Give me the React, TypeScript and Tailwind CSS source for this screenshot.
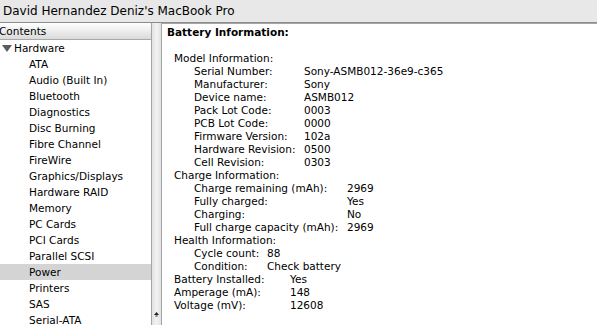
import React from 'react';

const hardware = [
  'ATA',
  'Audio (Built In)',
  'Bluetooth',
  'Diagnostics',
  'Disc Burning',
  'Fibre Channel',
  'FireWire',
  'Graphics/Displays',
  'Hardware RAID',
  'Memory',
  'PC Cards',
  'PCI Cards',
  'Parallel SCSI',
  'Power',
  'Printers',
  'SAS',
  'Serial-ATA',
];

const model = [
  ['Serial Number:', 'Sony-ASMB012-36e9-c365'],
  ['Manufacturer:', 'Sony'],
  ['Device name:', 'ASMB012'],
  ['Pack Lot Code:', '0003'],
  ['PCB Lot Code:', '0000'],
  ['Firmware Version:', '102a'],
  ['Hardware Revision:', '0500'],
  ['Cell Revision:', '0303'],
];

const charge = [
  ['Charge remaining (mAh):', '2969'],
  ['Fully charged:', 'Yes'],
  ['Charging:', 'No'],
  ['Full charge capacity (mAh):', '2969'],
];

const health = [
  ['Cycle count:', '88'],
  ['Condition:', 'Check battery'],
];

const battery = [
  ['Battery Installed:', 'Yes'],
  ['Amperage (mA):', '148'],
  ['Voltage (mV):', '12608'],
];

function Rows({ rows, cols }: { rows: string[][]; cols: string }) {
  return (
    <div className={`grid ${cols}`}>
      {rows.map(([k, v]) => (
        <React.Fragment key={k}>
          <span className="whitespace-nowrap">{k}</span>
          <span className="whitespace-nowrap">{v}</span>
        </React.Fragment>
      ))}
    </div>
  );
}

export default function App() {
  return (
    <div
      className="w-[597px] h-[325px] overflow-hidden bg-[#e8e8e8] text-black flex flex-col"
      style={{ fontFamily: '"DejaVu Sans", sans-serif' }}
    >
      {/* title bar */}
      <div className="h-[23px] shrink-0 border-b border-[#8c8c8c] pl-[3px] text-[12px] leading-[22px]">
        David Hernandez Deniz's MacBook Pro
      </div>

      <div className="flex flex-1 min-h-0">
        {/* source list */}
        <div className="w-[152px] shrink-0 flex flex-col border-r border-[#a5a5a5] bg-white">
          <div className="h-[17px] shrink-0 border-b border-[#a8a8a8] bg-gradient-to-b from-white to-[#dadada] text-[10.5px] leading-[16px] -ml-[1px]">
            Contents
          </div>
          <div className="text-[10.5px] leading-[16px]">
            <div className="h-4 flex items-center">
              <svg width="10" height="9" viewBox="0 0 10 9" className="ml-[2px] mr-[2px]">
                <polygon points="0,1 10,1 5,8" fill="#5c5c5c" />
              </svg>
              <span>Hardware</span>
            </div>
            {hardware.map((h) => (
              <div
                key={h}
                className={`h-4 pl-[29px] whitespace-nowrap ${h === 'Power' ? 'bg-[#d4d4d4]' : ''}`}
              >
                {h}
              </div>
            ))}
          </div>
        </div>

        {/* splitter / scroll strip */}
        <div className="w-[9px] shrink-0 flex flex-col justify-end items-center pb-[8px] bg-gradient-to-r from-[#e2e2e2] via-[#f2f2f2] to-[#e2e2e2]">
          <svg width="5" height="5" viewBox="0 0 5 5">
            <polygon points="2.5,0 5,3 0,3" fill="#222" />
            <rect x="1.5" y="3" width="2" height="2" fill="#888" />
          </svg>
        </div>

        {/* detail pane */}
        <div className="flex-1 bg-white border-l border-t border-[#a5a5a5] pt-[2px] pl-[5px] text-[10.5px] leading-[13px]">
          <div className="font-bold">Battery Information:</div>
          <div className="h-[13px]" />
          <div className="pl-[7px]">
            <div>Model Information:</div>
            <div className="pl-[20px]">
              <Rows rows={model} cols="grid-cols-[110px_auto]" />
            </div>
            <div>Charge Information:</div>
            <div className="pl-[20px]">
              <Rows rows={charge} cols="grid-cols-[153px_auto]" />
            </div>
            <div>Health Information:</div>
            <div className="pl-[20px]">
              <Rows rows={health} cols="grid-cols-[73px_auto]" />
            </div>
            <Rows rows={battery} cols="grid-cols-[116px_auto]" />
          </div>
        </div>
      </div>
    </div>
  );
}
